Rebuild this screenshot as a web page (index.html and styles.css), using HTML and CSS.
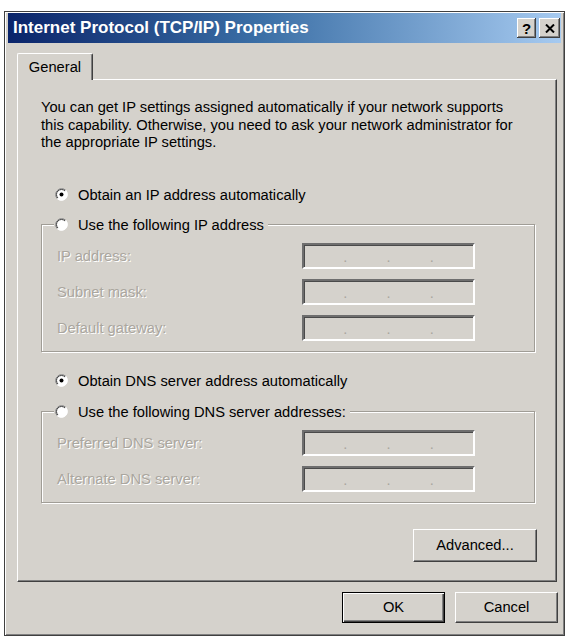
FILE: index.html
```html
<!DOCTYPE html>
<html>
<head>
<meta charset="utf-8">
<link rel="stylesheet" href="styles.css">
</head>
<body>
<div class="window">
  <div class="titlebar">
    <span class="title">Internet Protocol (TCP/IP) Properties</span>
    <div class="tb-buttons">
      <span class="tb-btn">?</span>
      <span class="tb-btn close">
        <svg width="10" height="9" viewBox="0 0 10 9"><path d="M1 0.5 L9 8.5 M9 0.5 L1 8.5" stroke="#000" stroke-width="2"/></svg>
      </span>
    </div>
  </div>
  <div class="tabs"><div class="tab">General</div></div>
  <div class="panel">
    <p class="intro">You can get IP settings assigned automatically if your network supports<br>this capability. Otherwise, you need to ask your network administrator for<br>the appropriate IP settings.</p>

    <div class="radio-row first">
      <svg class="radio" width="13" height="13" viewBox="0 0 13 13"><circle cx="6.5" cy="6.5" r="6" fill="#fff"/><path d="M2.26 10.74 A6 6 0 0 1 10.74 2.26" stroke="#808080" fill="none"/><path d="M2.96 10.04 A5 5 0 0 1 10.04 2.96" stroke="#404040" fill="none"/><path d="M10.74 2.26 A6 6 0 0 1 2.26 10.74" stroke="#fff" fill="none"/><circle cx="6.5" cy="6.5" r="2" fill="#000"/></svg>
      <span>Obtain an IP address automatically</span>
    </div>

    <fieldset class="group first-group">
      <legend class="legend">
        <svg class="radio" width="13" height="13" viewBox="0 0 13 13"><circle cx="6.5" cy="6.5" r="6" fill="#fff"/><path d="M2.26 10.74 A6 6 0 0 1 10.74 2.26" stroke="#808080" fill="none"/><path d="M2.96 10.04 A5 5 0 0 1 10.04 2.96" stroke="#404040" fill="none"/><path d="M10.74 2.26 A6 6 0 0 1 2.26 10.74" stroke="#fff" fill="none"/></svg>
        <span>Use the following IP address</span>
      </legend>
      <div class="grid">
        <span class="dis">IP address:</span>
        <div class="field"><span>.</span><span>.</span><span>.</span></div>
        <span class="dis">Subnet mask:</span>
        <div class="field"><span>.</span><span>.</span><span>.</span></div>
        <span class="dis">Default gateway:</span>
        <div class="field"><span>.</span><span>.</span><span>.</span></div>
      </div>
    </fieldset>

    <div class="radio-row second">
      <svg class="radio" width="13" height="13" viewBox="0 0 13 13"><circle cx="6.5" cy="6.5" r="6" fill="#fff"/><path d="M2.26 10.74 A6 6 0 0 1 10.74 2.26" stroke="#808080" fill="none"/><path d="M2.96 10.04 A5 5 0 0 1 10.04 2.96" stroke="#404040" fill="none"/><path d="M10.74 2.26 A6 6 0 0 1 2.26 10.74" stroke="#fff" fill="none"/><circle cx="6.5" cy="6.5" r="2" fill="#000"/></svg>
      <span>Obtain DNS server address automatically</span>
    </div>

    <fieldset class="group second-group">
      <legend class="legend">
        <svg class="radio" width="13" height="13" viewBox="0 0 13 13"><circle cx="6.5" cy="6.5" r="6" fill="#fff"/><path d="M2.26 10.74 A6 6 0 0 1 10.74 2.26" stroke="#808080" fill="none"/><path d="M2.96 10.04 A5 5 0 0 1 10.04 2.96" stroke="#404040" fill="none"/><path d="M10.74 2.26 A6 6 0 0 1 2.26 10.74" stroke="#fff" fill="none"/></svg>
        <span>Use the following DNS server addresses:</span>
      </legend>
      <div class="grid">
        <span class="dis">Preferred DNS server:</span>
        <div class="field"><span>.</span><span>.</span><span>.</span></div>
        <span class="dis">Alternate DNS server:</span>
        <div class="field"><span>.</span><span>.</span><span>.</span></div>
      </div>
    </fieldset>

    <div class="adv-row"><button class="btn adv">Advanced...</button></div>
  </div>
  <div class="footer">
    <button class="btn ok">OK</button>
    <button class="btn cancel">Cancel</button>
  </div>
</div>
</body>
</html>
```

FILE: styles.css
```css
* { box-sizing: border-box; }

body {
  margin: 0;
  background: #fff;
  font-family: "Liberation Sans", Arial, sans-serif;
  font-size: 14.7px;
  color: #000;
}

.window {
  margin: 11px 0 0 4px;
  width: 561px;
  height: 625px;
  background: #d5d2cc;
  border: 1px solid #404040;
  padding: 1px 3px 3px 3px;
  box-shadow: inset 1px 1px 0 #fff, inset -1px -1px 0 #808080;
  display: flex;
  flex-direction: column;
}

.titlebar {
  height: 30px;
  flex: none;
  display: flex;
  align-items: center;
  justify-content: space-between;
  padding: 0 1px 0 5px;
  background: linear-gradient(to right, #0a246a 0%, #3a6ea5 45%, #a6caf0 100%);
}

.title {
  color: #fff;
  font-weight: bold;
  font-size: 17px;
}

.tb-buttons {
  display: flex;
  gap: 3px;
}

.tb-btn {
  width: 19px;
  height: 20px;
  background: #d5d2cc;
  display: flex;
  align-items: center;
  justify-content: center;
  font-weight: bold;
  font-size: 15px;
  box-shadow: inset -1px -1px 0 #404040, inset 1px 1px 0 #fff, inset -2px -2px 0 #808080;
}

.tb-btn.close { width: 21px; }

.tabs {
  flex: none;
  margin-top: 10px;
  margin-bottom: -1px;
  padding-left: 9px;
  display: flex;
  position: relative;
  z-index: 1;
}

.tab {
  width: 76px;
  height: 27px;
  background: #d5d2cc;
  border-top: 1px solid #fff;
  border-left: 1px solid #fff;
  border-right: 1px solid #404040;
  border-radius: 2px 2px 0 0;
  box-shadow: inset -1px 0 0 #808080;
  display: flex;
  align-items: center;
  justify-content: center;
  padding-bottom: 1px;
}

.panel {
  flex: none;
  width: 540px;
  margin-left: 9px;
  border-top: 1px solid #fff;
  border-left: 1px solid #fff;
  border-right: 1px solid #404040;
  border-bottom: 1px solid #404040;
  box-shadow: inset -1px -1px 0 #808080;
  padding: 19px 21px 19px 23px;
}

.intro {
  margin: 0;
  line-height: 17.5px;
}

.radio-row {
  display: flex;
  align-items: center;
  gap: 10px;
  height: 20px;
  padding-left: 14px;
}

.radio-row.first { margin-top: 33px; }
.radio-row.second { margin-top: 19px; }

.radio { flex: none; display: block; }

.group {
  margin: 10px 0 0 0;
  min-width: 0;
  border: 1px solid #a09d96;
  box-shadow: 1px 1px 0 #fff, inset 1px 1px 0 #fff;
  padding: 8px 0 10px 15px;
}

.second-group { margin-top: 11px; }

.legend {
  display: flex;
  align-items: center;
  gap: 10px;
  height: 20px;
  margin-left: -3px;
  padding: 0 4px 0 1px;
  background: #d5d2cc;
}

.grid {
  display: grid;
  grid-template-columns: 245px 173px;
  grid-auto-rows: 26px;
  row-gap: 10px;
  align-items: center;
}

.dis {
  color: #aaa69e;
  text-shadow: 1px 1px 0 #fff;
}

.field {
  height: 26px;
  border-top: 2px solid #6e6e6e;
  border-left: 2px solid #6e6e6e;
  border-right: 2px solid #fff;
  border-bottom: 2px solid #fff;
  box-shadow: inset 1px 1px 0 #4a4a4a;
  display: flex;
  justify-content: space-evenly;
  align-items: center;
  padding-top: 3px;
  color: #aaa69e;
  line-height: 14px;
}

.adv-row {
  display: flex;
  justify-content: flex-end;
  margin-top: 26px;
  margin-right: -2px;
}

.btn {
  font: inherit;
  color: #000;
  background: #d5d2cc;
  border: 1px solid;
  border-color: #fff #404040 #404040 #fff;
  box-shadow: inset -1px -1px 0 #808080;
  padding: 0;
  margin: 0;
}

.adv {
  width: 124px;
  height: 33px;
}

.footer {
  flex: none;
  display: flex;
  justify-content: flex-end;
  gap: 10px;
  padding: 10px 3px 0 0;
}

.ok, .cancel {
  width: 103px;
  height: 31px;
}

.ok {
  border: 1px solid #000;
  box-shadow: inset 1px 1px 0 #fff, inset -1px -1px 0 #404040, inset -2px -2px 0 #808080;
}
```
